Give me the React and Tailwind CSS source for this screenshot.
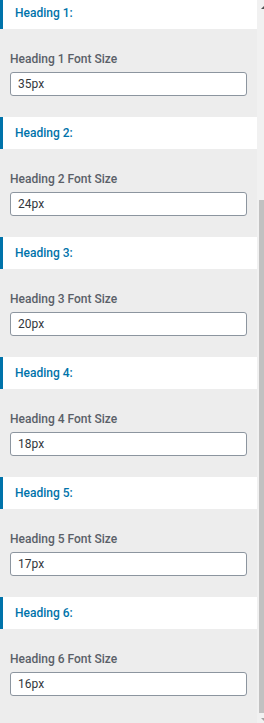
import React from 'react';

const headings = [
    { level: 1, size: '35px' },
    { level: 2, size: '24px' },
    { level: 3, size: '20px' },
    { level: 4, size: '18px' },
    { level: 5, size: '17px' },
    { level: 6, size: '16px' },
];

const HeadingGroup = ({ level, size }) => (
    <div>
        <div className="h-[32px] bg-white border-l-[3px] border-[#0073aa] flex items-center pl-[12px]">
            <span className="text-[12px] font-medium text-[#0073aa]">Heading {level}:</span>
        </div>
        <div className="h-[88px] bg-[#ededed] px-[10px] pt-[23px]">
            <label className="block text-[12px] font-medium text-[#5a6068] leading-[14px]">
                Heading {level} Font Size
            </label>
            <input
                type="text"
                defaultValue={size}
                className="block mt-[6px] w-[237px] h-[24px] rounded-[3px] border border-[#8c959f] bg-white px-[7px] text-[12px] text-[#32373c] outline-none"
            />
        </div>
    </div>
);

const App = () => {
    return (
        <div className="flex h-[723px] w-[264px] overflow-hidden bg-[#ededed] font-['Roboto',sans-serif]">
            {/* panel content, scrolled a bit */}
            <div className="w-[257px] overflow-hidden">
                <div className="h-px bg-[#dcdcde]" />
                <div className="-mt-[4px]">
                    {headings.map(h => (
                        <HeadingGroup key={h.level} level={h.level} size={h.size} />
                    ))}
                </div>
            </div>

            {/* scrollbar */}
            <div className="w-[7px] bg-[#f1f1f1] flex flex-col items-end">
                <div className="h-[6px]" />
                <div className="w-0 h-0 border-l-[3px] border-l-transparent border-b-[3px] border-b-[#505050]" />
                <div className="h-[191px]" />
                <div className="w-[5px] h-[513px] bg-[#c1c1c1]" />
                <div className="h-[5px]" />
                <div className="w-0 h-0 border-l-[3px] border-l-transparent border-t-[3px] border-t-[#a3a3a3]" />
            </div>
        </div>
    );
};

export default App;
